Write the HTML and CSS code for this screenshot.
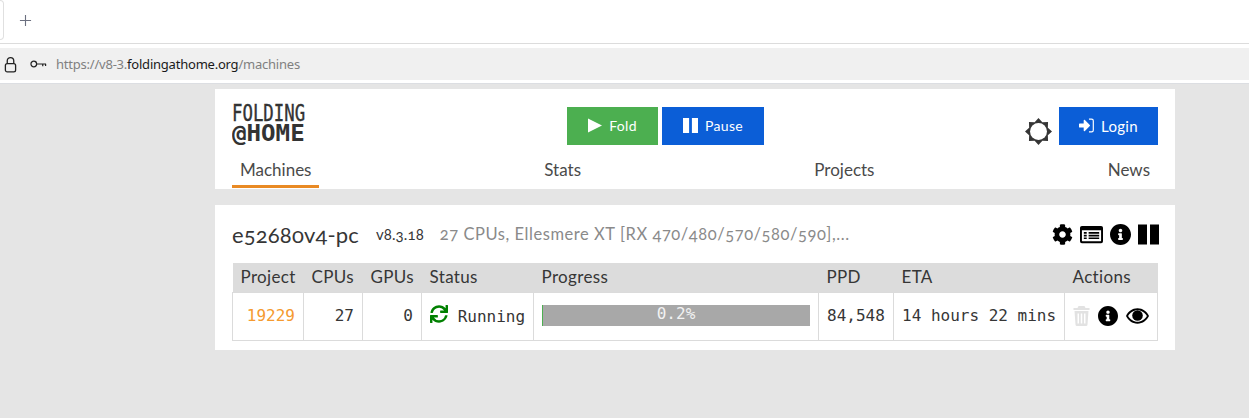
FILE: index.html
```html
<!DOCTYPE html>
<html lang="en">
<head>
  <meta charset="UTF-8" />
  <title>Folding@home</title>
  <link rel="stylesheet" href="styles.css">
</head>
<body>
  <div class="tabbar">
    <div class="tab-edge"></div>
    <svg class="new-tab" viewBox="0 0 14 14"><path d="M7 1v12M1 7h12" /></svg>
  </div>
  <div class="urlrow">
    <div class="urlbar">
      <svg class="lock" viewBox="0 0 14 18"><rect x="1.5" y="8" width="11" height="9" rx="2" /><path d="M3.5 8V5a3.5 3.5 0 0 1 7 0v3" /></svg>
      <svg class="key" viewBox="0 0 18 10"><circle cx="4" cy="5" r="3" /><path d="M7 5h10M13.500 5v2.500M16.500 5v2" /></svg>
      <span class="url">https://v8-3.<b>foldingathome.org</b>/machines</span>
    </div>
  </div>

  <div class="page">
    <div id="header" class="card">
      <div class="head-top">
        <div class="logo">
          <div class="logo-line logo-top">FOLDING</div>
          <div class="logo-line logo-bottom">@HOME</div>
        </div>
        <div class="head-buttons">
          <button class="btn btn-green">
            <svg class="btn-icon" viewBox="0 0 14 14"><path d="M0 0l14 7-14 7z" /></svg>Fold
          </button>
          <button class="btn btn-blue">
            <svg class="btn-icon btn-icon-pause" viewBox="0 0 16 16"><path d="M0 0h6.500v16H0zM9.500 0H16v16H9.500z" /></svg>Pause
          </button>
        </div>
        <div class="head-right">
          <svg class="sun" viewBox="0 0 28 28">
            <polygon points="14,0 18,4.300 23.900,4.100 23.700,10 28,14 23.700,18 23.900,23.900 18,23.700 14,28 10,23.700 4.100,23.900 4.300,18 0,14 4.300,10 4.100,4.100 10,4.300" />
            <circle class="sun-hole" cx="14" cy="14" r="8.800" />
          </svg>
          <button class="btn btn-blue btn-login">
            <svg class="btn-icon login-icon" viewBox="0 0 512 512"><path d="M369 247L201 79c-15-15-41-4.500-41 17v96H24c-13.300 0-24 10.700-24 24v96c0 13.300 10.700 24 24 24h136v96c0 21.500 26 32 41 17l168-168c9.300-9.400 9.300-24.600 0-34z" transform="translate(0 -8)" /><path class="login-door" d="M340 40h90c35 0 58 25 58 58v316c0 33-23 58-58 58h-90" /></svg>Login
          </button>
        </div>
      </div>
      <nav class="nav">
        <a class="active">Machines</a>
        <a>Stats</a>
        <a>Projects</a>
        <a>News</a>
      </nav>
    </div>

    <div id="machine" class="card">
      <div class="machine-head">
        <span class="machine-name">e52680v4-pc</span>
        <span class="machine-ver">v8.3.18</span>
        <span class="machine-desc">27 CPUs, Ellesmere XT [RX 470/480/570/580/590],...</span>
        <div class="machine-icons">
          <svg class="mi mi-cog" viewBox="0 0 512 512"><path d="M487.4 315.700l-42.600-24.600c4.300-23.200 4.300-47 0-70.200l42.600-24.600c4.900-2.800 7.100-8.600 5.500-14-11.100-35.600-30-67.800-54.700-94.600-3.800-4.100-10-5.100-14.800-2.300L380.800 110c-17.900-15.400-38.500-27.300-60.800-35.100V25.800c0-5.600-3.900-10.500-9.400-11.700-36.700-8.200-74.300-7.800-109.200 0-5.500 1.200-9.400 6.100-9.400 11.700V75c-22.200 7.900-42.800 19.800-60.800 35.100L88.700 85.500c-4.900-2.800-11-1.900-14.800 2.300-24.700 26.700-43.600 58.900-54.700 94.600-1.700 5.400.6 11.200 5.500 14L67.300 221c-4.300 23.200-4.300 47 0 70.200l-42.600 24.600c-4.900 2.800-7.100 8.600-5.500 14 11.100 35.600 30 67.800 54.700 94.600 3.800 4.100 10 5.100 14.800 2.300l42.600-24.600c17.900 15.400 38.500 27.300 60.800 35.100v49.200c0 5.600 3.900 10.500 9.400 11.700 36.700 8.200 74.300 7.800 109.200 0 5.500-1.200 9.400-6.100 9.400-11.700v-49.200c22.200-7.900 42.800-19.800 60.800-35.100l42.600 24.600c4.900 2.800 11 1.900 14.800-2.300 24.700-26.700 43.600-58.900 54.700-94.600 1.500-5.500-.7-11.300-5.600-14.100zM256 336c-44.100 0-80-35.900-80-80s35.900-80 80-80 80 35.900 80 80-35.900 80-80 80z" /></svg>
          <svg class="mi mi-log" viewBox="0 0 24 18"><path fill-rule="evenodd" d="M2 0h20a2 2 0 0 1 2 2v14a2 2 0 0 1-2 2H2a2 2 0 0 1-2-2V2a2 2 0 0 1 2-2zm0 4.500V15.500a.5.500 0 0 0 .5.500h19a.5.500 0 0 0 .5-.5V4.500zM4 6.500h3v1.700H4zm5 0h11v1.700H9zM4 9.300h3V11H4zm5 0h11V11H9zM4 12.100h3v1.700H4zm5 0h11v1.700H9z" /></svg>
          <svg class="mi mi-info" viewBox="8 8 496 496"><path d="M256 8C119.043 8 8 119.083 8 256c0 136.997 111.043 248 248 248s248-111.003 248-248C504 119.083 392.957 8 256 8zm0 110c23.196 0 42 18.804 42 42s-18.804 42-42 42-42-18.804-42-42 18.804-42 42-42zm56 254c0 6.627-5.373 12-12 12h-88c-6.627 0-12-5.373-12-12v-24c0-6.627 5.373-12 12-12h12v-64h-12c-6.627 0-12-5.373-12-12v-24c0-6.627 5.373-12 12-12h64c6.627 0 12 5.373 12 12v100h12c6.627 0 12 5.373 12 12v24z" /></svg>
          <svg class="mi mi-pause" viewBox="0 0 21 20"><path d="M0 0h9v20H0zM12 0h9v20h-9z" /></svg>
        </div>
      </div>

      <table class="units">
        <colgroup>
          <col class="c-project"><col class="c-cpus"><col class="c-gpus"><col class="c-status">
          <col class="c-progress"><col class="c-ppd"><col class="c-eta"><col class="c-actions">
        </colgroup>
        <tr>
          <th>Project</th>
          <th>CPUs</th>
          <th>GPUs</th>
          <th>Status</th>
          <th>Progress</th>
          <th>PPD</th>
          <th>ETA</th>
          <th>Actions</th>
        </tr>
        <tr>
          <td class="num project">19229</td>
          <td class="num">27</td>
          <td class="num">0</td>
          <td class="status">
            <svg class="sync" viewBox="0 0 512 512"><path d="M440.650 12.570l4 82.770A247.160 247.160 0 0 0 255.830 8C134.730 8 33.910 94.920 12.290 209.820A12 12 0 0 0 24.090 224h49.050a12 12 0 0 0 11.670-9.260 175.910 175.910 0 0 1 317-56.940l-101.460-4.860a12 12 0 0 0-12.570 12v47.410a12 12 0 0 0 12 12H500a12 12 0 0 0 12-12V12a12 12 0 0 0-12-12h-47.370a12 12 0 0 0-11.980 12.570zM255.830 432a175.610 175.610 0 0 1-146-77.800l101.800 4.870a12 12 0 0 0 12.570-12v-47.400a12 12 0 0 0-12-12H12a12 12 0 0 0-12 12V500a12 12 0 0 0 12 12h47.350a12 12 0 0 0 12-12.600l-4.150-82.570A247.170 247.170 0 0 0 255.830 504c121.110 0 221.930-86.920 243.550-201.820a12 12 0 0 0-11.800-14.180h-49.050a12 12 0 0 0-11.670 9.260A175.860 175.860 0 0 1 255.830 432z" /></svg>
            <span>Running</span>
          </td>
          <td class="progress-cell">
            <div class="progress"><div class="progress-fill" style="width: 0.2%"></div><span class="progress-text">0.2%</span></div>
          </td>
          <td class="mono">84,548</td>
          <td class="mono">14 hours 22 mins</td>
          <td class="actions">
            <svg class="act act-trash" viewBox="0 0 16 20"><path fill-rule="evenodd" d="M5 0h6l1 2h4v2H0V2h4zM1 5h14l-1 13.500a1.500 1.500 0 0 1-1.500 1.500h-9A1.500 1.500 0 0 1 2 18.500zm3 2.500v10h1.500v-10zm3.250 0v10h1.500v-10zm3.250 0v10H12v-10z" /></svg>
            <svg class="act act-info" viewBox="8 8 496 496"><path d="M256 8C119.043 8 8 119.083 8 256c0 136.997 111.043 248 248 248s248-111.003 248-248C504 119.083 392.957 8 256 8zm0 110c23.196 0 42 18.804 42 42s-18.804 42-42 42-42-18.804-42-42 18.804-42 42-42zm56 254c0 6.627-5.373 12-12 12h-88c-6.627 0-12-5.373-12-12v-24c0-6.627 5.373-12 12-12h12v-64h-12c-6.627 0-12-5.373-12-12v-24c0-6.627 5.373-12 12-12h64c6.627 0 12 5.373 12 12v100h12c6.627 0 12 5.373 12 12v24z" /></svg>
            <svg class="act act-eye" viewBox="0 0 24 16"><path fill-rule="evenodd" d="M12 0c5.500 0 9.800 3.400 12 8-2.200 4.600-6.500 8-12 8S2.200 12.600 0 8c2.200-4.600 6.500-8 12-8zM2.200 8c2 3.400 5.500 6 9.800 6s7.800-2.600 9.800-6c-2-3.400-5.500-6-9.800-6S4.200 4.600 2.200 8z" /><circle cx="12" cy="7.500" r="5.500" /></svg>
          </td>
        </tr>
      </table>
    </div>
  </div>
</body>
</html>
```

FILE: styles.css
```css
html, body {
  margin: 0;
  padding: 0;
}

body {
  height: 418px;
  overflow: hidden;
  background-color: #e5e5e5;
  font-family: "Lato", "Open Sans", sans-serif;
  color: #363636;
}

/* browser chrome */
.tabbar {
  height: 43px;
  display: flex;
  align-items: center;
  background-color: #fff;
  border-bottom: 1px solid #dcdcdc;
}

.tab-edge {
  width: 3px;
  height: 38px;
  margin-bottom: 4px;
  border: 1px solid #e0e0e0;
  border-left: none;
  border-radius: 0 5px 5px 0;
}

.new-tab {
  width: 13px;
  height: 13px;
  margin-left: 15px;
  margin-bottom: 2px;
  stroke: #6c7080;
  stroke-width: 1.2;
  fill: none;
}

.urlrow {
  height: 40px;
  padding-top: 4px;
  box-sizing: border-box;
  background-color: #fff;
  border-bottom: 1px solid #dcdee2;
}

.urlbar {
  height: 32px;
  display: flex;
  align-items: center;
  background-color: #f0f0f0;
  padding-left: 4px;
  font-family: "Noto Sans", sans-serif;
  font-size: 13px;
  letter-spacing: -0.22px;
  color: #808080;
}

.lock {
  width: 13px;
  height: 17px;
  fill: none;
  stroke: #222;
  stroke-width: 1.4;
}

.key {
  width: 17px;
  height: 10px;
  margin-left: 13px;
  margin-right: 9px;
  fill: none;
  stroke: #222;
  stroke-width: 1.3;
}

.url b {
  font-weight: 400;
  color: #1a1a1a;
}

/* page */
.page {
  width: 960px;
  margin-left: 215px;
  padding-top: 5px;
}

.card {
  background-color: #fff;
}

#header {
  height: 100px;
  padding: 0 17px;
  box-sizing: border-box;
  margin-bottom: 16px;
}

.head-top {
  height: 49px;
  padding-top: 18px;
  display: flex;
}

.logo {
  width: 335px;
  margin-top: -4px;
}

.logo-line {
  font-family: "DejaVu Sans Mono", monospace;
  font-size: 23px;
  line-height: 20px;
  height: 20px;
  color: #333;
  transform-origin: left center;
  white-space: nowrap;
}

.logo-top {
  transform: scaleX(0.755);
  -webkit-text-stroke: 0.4px #333;
}

.logo-bottom {
  font-weight: 700;
  transform: scaleX(1.05);
}

.head-buttons {
  display: flex;
  gap: 4px;
}

.btn {
  height: 38px;
  border: none;
  padding: 0 0 1px;
  display: flex;
  align-items: center;
  justify-content: center;
  font-family: inherit;
  font-size: 14px;
  color: #fff;
  letter-spacing: 0.3px;
}

.btn-green {
  width: 91px;
  background-color: #4caf50;
}

.btn-blue {
  width: 102px;
  background-color: #0b5ed7;
}

.btn-icon {
  width: 14px;
  height: 15px;
  margin-right: 7px;
  fill: #fff;
}

.btn-icon-pause {
  width: 15px;
}

.head-right {
  margin-left: auto;
  display: flex;
  align-items: flex-start;
  gap: 7px;
}

.sun {
  width: 27px;
  height: 27px;
  margin-top: 11px;
  fill: #363636;
}

.sun-hole {
  fill: #fff;
}

.btn-login {
  width: 99px;
  font-size: 15px;
}

.login-icon {
  width: 15px;
}

.login-door {
  fill: none;
  stroke: #fff;
  stroke-width: 40;
}

.nav {
  display: flex;
  justify-content: space-between;
  font-size: 17px;
}

.nav a {
  padding: 3px 8px 0;
  color: #4a4a4a;
  line-height: 21px;
}

.nav .active {
  width: 71px;
  text-align: center;
  border-bottom: 3px solid #e98a24;
  height: 26px;
}

/* machine card */
#machine {
  height: 145px;
  padding: 0 17px;
  box-sizing: border-box;
}

.machine-head {
  height: 58px;
  display: flex;
  align-items: center;
  font-variant-numeric: oldstyle-nums;
}

.machine-name {
  font-size: 22px;
  letter-spacing: 0.15px;
  color: #363636;
}

.machine-ver {
  font-size: 15px;
  letter-spacing: 0.1px;
  margin-left: 17px;
}

.machine-desc {
  font-size: 16.500px;
  letter-spacing: 0.55px;
  margin-left: 16px;
  color: #8a8a8a;
}

.machine-icons {
  margin-left: auto;
  display: flex;
  align-items: center;
  gap: 7px;
  margin-right: -1px;
}

.mi {
  height: 21px;
  width: 21px;
  fill: #000;
}

.mi-log {
  width: 23px;
  height: 19px;
}

.units {
  width: 926px;
  border-collapse: collapse;
  table-layout: fixed;
}

.c-project { width: 71px; }
.c-cpus { width: 59px; }
.c-gpus { width: 59px; }
.c-status { width: 112px; }
.c-progress { width: 285px; }
.c-ppd { width: 75px; }
.c-eta { width: 171px; }
.c-actions { width: 93px; }

.units th {
  height: 29px;
  padding: 0 8px 1px;
  box-sizing: border-box;
  background-color: #dcdcdc;
  font-size: 17px;
  letter-spacing: 0.35px;
  font-weight: 400;
  text-align: left;
  color: #363636;
  border: none;
  white-space: nowrap;
}

.units td {
  height: 48px;
  padding: 0 8px 2px;
  box-sizing: border-box;
  border: 1px solid #dbdbdb;
  font-family: "DejaVu Sans Mono", monospace;
  font-size: 16px;
  white-space: nowrap;
}

.units .num {
  text-align: right;
}

.units .project {
  color: #f59a2f;
}

.status {
  line-height: 20px;
}

.status span {
  vertical-align: -3px;
}

.sync {
  width: 18px;
  height: 18px;
  fill: #008000;
  vertical-align: -4px;
}

.progress {
  position: relative;
  height: 21px;
  background-color: #a8a8a8;
  text-align: center;
  line-height: 18px;
}

.progress-fill {
  position: absolute;
  left: 0;
  top: 0;
  height: 100%;
  min-width: 1px;
  background-color: #4caf50;
}

.progress-text {
  position: relative;
  color: #f2f2f2;
}

.units .actions {
  font-size: 0;
  line-height: 0;
  padding-bottom: 0;
}

.act {
  height: 20px;
}

.act-trash {
  width: 17px;
  fill: #e2e2e2;
}

.act-info {
  width: 20px;
  margin-left: 8px;
  fill: #000;
}

.act-eye {
  width: 23px;
  margin-left: 8px;
  fill: #000;
}
```
